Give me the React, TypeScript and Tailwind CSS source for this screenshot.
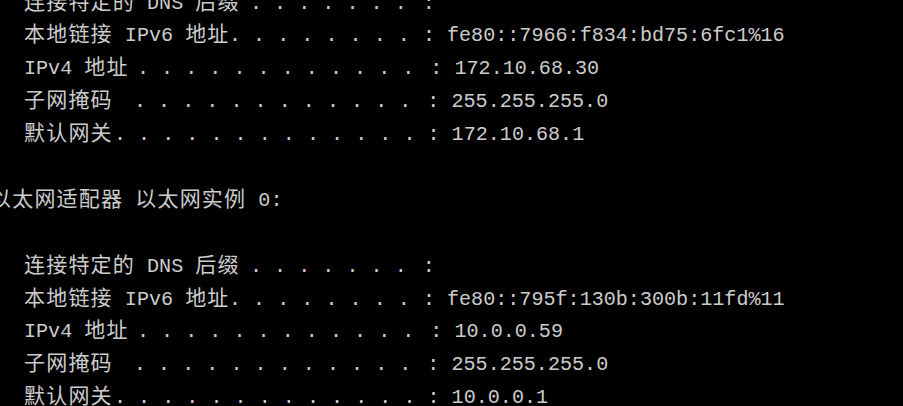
const ADAPTER_A = [
  { label: '连接特定的 DNS 后缀', lw: 'w-[226px]', dots: 7, cm: 'ml-[16px]', value: '' },
  { label: '本地链接 IPv6 地址', lw: 'w-[205px]', dots: 8, cm: 'ml-[13px]', value: 'fe80::7966:f834:bd75:6fc1%16' },
  { label: 'IPv4 地址', lw: 'w-[113px]', dots: 12, cm: 'ml-[16px]', value: '172.10.68.30' },
  { label: '子网掩码', lw: 'w-[110px]', dots: 12, cm: 'ml-[16px]', value: '255.255.255.0' },
  { label: '默认网关', lw: 'w-[90px]', dots: 13, cm: 'ml-[12px]', value: '172.10.68.1' },
];

const ADAPTER_B = [
  { label: '连接特定的 DNS 后缀', lw: 'w-[226px]', dots: 7, cm: 'ml-[16px]', value: '' },
  { label: '本地链接 IPv6 地址', lw: 'w-[205px]', dots: 8, cm: 'ml-[13px]', value: 'fe80::795f:130b:300b:11fd%11' },
  { label: 'IPv4 地址', lw: 'w-[113px]', dots: 12, cm: 'ml-[16px]', value: '10.0.0.59' },
  { label: '子网掩码', lw: 'w-[110px]', dots: 12, cm: 'ml-[16px]', value: '255.255.255.0' },
  { label: '默认网关', lw: 'w-[90px]', dots: 13, cm: 'ml-[12px]', value: '10.0.0.1' },
];

function ConsoleText({ text }: { text: string }) {
  const parts = text.split(/([\u3000-\u9fff]+)/);
  return (
    <>
      {parts.map((p, i) =>
        /[\u3000-\u9fff]/.test(p) ? (
          <span key={i} className="text-[21px] tracking-[1.2px]">{p}</span>
        ) : (
          <span key={i}>{p}</span>
        )
      )}
    </>
  );
}

type RowProps = { label: string; lw: string; dots: number; cm: string; value: string };

function Row({ label, lw, dots, cm, value }: RowProps) {
  return (
    <div className="flex h-[32.9px] items-center pl-[24px] whitespace-pre">
      <span className={`${lw} shrink-0 whitespace-nowrap`}>
        <ConsoleText text={label} />
      </span>
      <span>{'. '.repeat(dots - 1) + '.'}</span>
      <span className={cm}>{value ? `: ${value}` : ':'}</span>
    </div>
  );
}

function Blank() {
  return <div className="h-[32.9px]" />;
}

export default function App() {
  return (
    <div className="h-[406px] w-full overflow-hidden bg-black text-[#cccccc] text-[20.1px] leading-[32.9px] font-['Liberation_Mono','Noto_Sans_CJK_SC',monospace]">
      <div className="-mt-[12.5px]">
        {ADAPTER_A.map(r => (
          <Row key={r.label} {...r} />
        ))}
        <Blank />
        <div className="flex h-[32.9px] items-center -ml-[10px] whitespace-pre">
          <ConsoleText text="以太网适配器 以太网实例 0:" />
        </div>
        <Blank />
        {ADAPTER_B.map(r => (
          <Row key={r.label} {...r} />
        ))}
      </div>
    </div>
  );
}
